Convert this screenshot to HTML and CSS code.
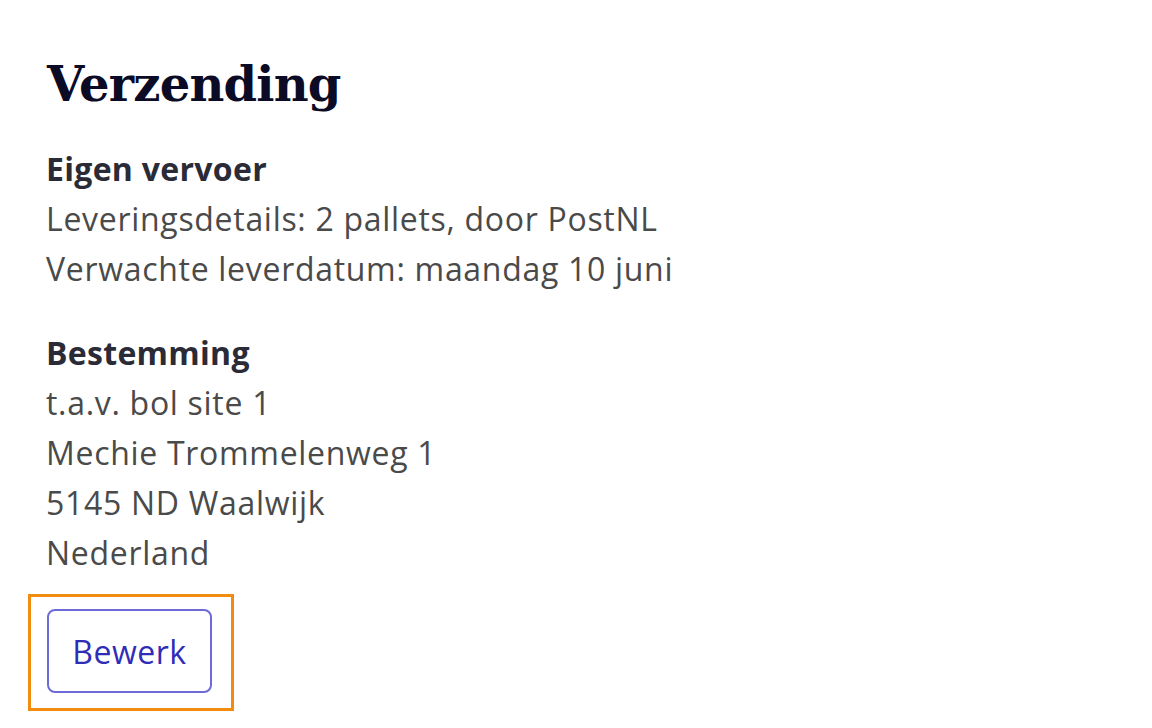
FILE: index.html
```html
<!DOCTYPE html>
<html lang="nl">
<head>
<meta charset="utf-8">
<link rel="stylesheet" href="styles.css">
</head>
<body>
<main class="page">
  <h1 class="title">Verzending</h1>
  <section class="block">
    <p class="label">Eigen vervoer</p>
    <p class="line">Leveringsdetails: 2 pallets, door PostNL</p>
    <p class="line">Verwachte leverdatum: maandag 10 juni</p>
  </section>
  <section class="block">
    <p class="label">Bestemming</p>
    <p class="line">t.a.v. bol site 1</p>
    <p class="line">Mechie Trommelenweg 1</p>
    <p class="line">5145 ND Waalwijk</p>
    <p class="line">Nederland</p>
  </section>
  <div class="highlight">
    <button class="btn">Bewerk</button>
  </div>
</main>
</body>
</html>
```
FILE: styles.css
```css
* { box-sizing: border-box; }
html, body { margin: 0; padding: 0; background: #ffffff; }
.page {
  padding: 52px 0 0 46px;
  display: flex;
  flex-direction: column;
  align-items: flex-start;
  font-family: "Open Sans", "Liberation Sans", sans-serif;
}
.title {
  margin: 0 0 0 1px;
  font-family: "DejaVu Serif", serif;
  font-weight: 700;
  font-size: 48px;
  line-height: 64px;
  color: #0b0b26;
  letter-spacing: -0.8px;
}
.block {
  display: flex;
  flex-direction: column;
  margin-top: 28px;
}
.block + .block { margin-top: 34px; }
.label, .line {
  margin: 0;
  font-size: 32px;
  line-height: 50px;
}
.label { font-weight: 700; color: #2b2b38; letter-spacing: 0.3px; }
.line { color: #4a4a4a; letter-spacing: 0.7px; }
.highlight {
  margin: 16px 0 0 -18px;
  border: 3px solid #f28c0f;
  padding: 12px 19px 15px 16px;
}
.btn {
  display: block;
  width: 165px;
  height: 84px;
  border: 2px solid #6d6bd8;
  border-radius: 8px;
  background: #fff;
  color: #2f2db8;
  font-family: "Open Sans", "Liberation Sans", sans-serif;
  font-size: 32px;
  letter-spacing: 0.5px;
  padding: 0;
}
```
